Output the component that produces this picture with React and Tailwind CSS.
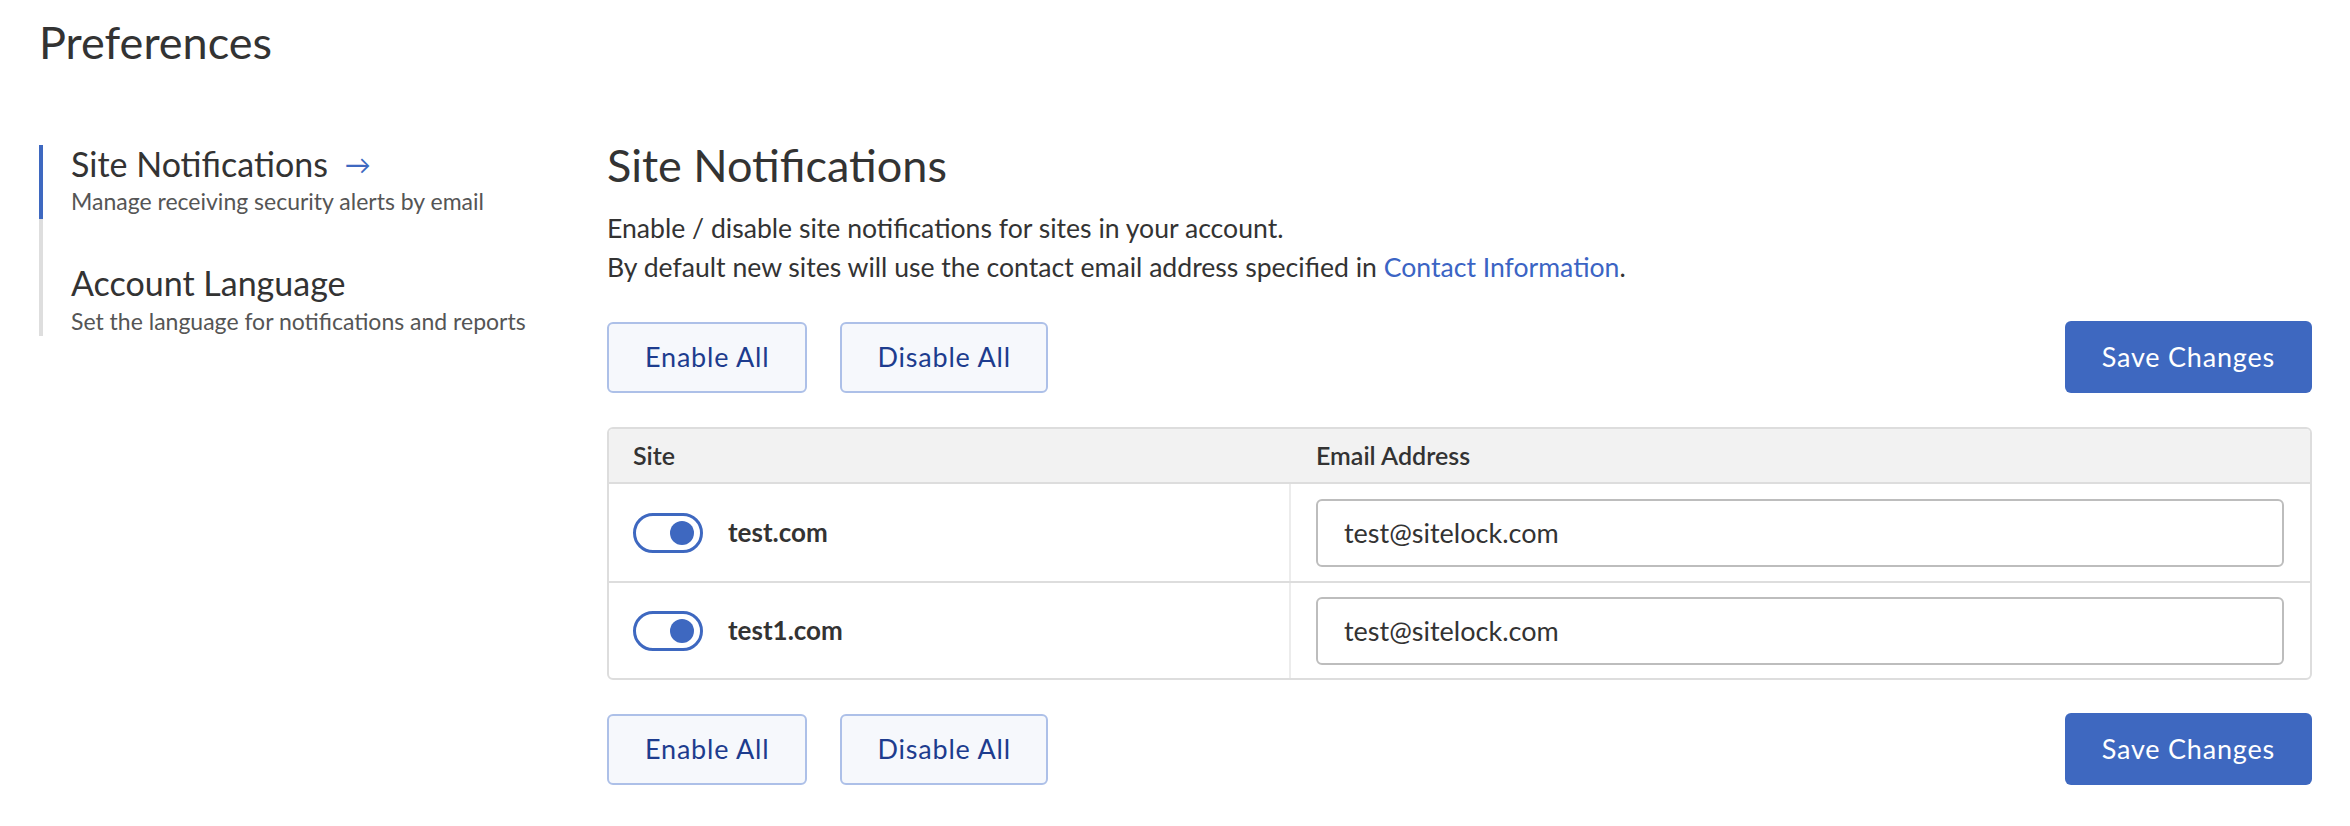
import React from 'react'

const sites = [
  { name: 'test.com', email: 'test@sitelock.com' },
  { name: 'test1.com', email: 'test@sitelock.com' },
]

function Toggle() {
  return (
    <div className="w-[70px] h-[40px] rounded-full border-[3px] border-[#3e68c0] bg-white flex items-center justify-end pr-[6px] shrink-0">
      <div className="w-[24px] h-[24px] rounded-full bg-[#3e68c0]" />
    </div>
  )
}

function ActionRow() {
  return (
    <div className="flex items-center justify-between">
      <div className="flex gap-[33px]">
        <button className="h-[71px] px-[36px] rounded-[6px] border-2 border-[#adc0e8] bg-[#f6f8fc] text-[#1d3c8e] text-[27px] tracking-[0.8px]">
          Enable All
        </button>
        <button className="h-[71px] px-[35px] rounded-[6px] border-2 border-[#adc0e8] bg-[#f6f8fc] text-[#1d3c8e] text-[27px] tracking-[0.8px]">
          Disable All
        </button>
      </div>
      <button className="h-[72px] px-[37px] rounded-[6px] bg-[#3e68c0] text-white text-[27px] tracking-[0.8px]">
        Save Changes
      </button>
    </div>
  )
}

export default function App() {
  return (
    <main className="min-h-screen bg-white text-[#333] font-['Lato','Liberation_Sans',sans-serif] pl-[39px] pr-[38px] pt-[14px]">
      {/* Page title */}
      <h1 className="text-[45px] leading-[56px] text-[#333]">Preferences</h1>

      <div className="flex mt-[71px]">
        {/* Sidebar */}
        <nav className="w-[568px] shrink-0 pt-[4px]">
          <div className="border-l-4 border-[#3e68c0] pl-[28px] pb-[4px]">
            <div className="flex items-center gap-[17px] text-[34px] leading-[38px] text-[#333]">
              Site Notifications
              <span className="text-[#3e68c0] text-[26px]">→</span>
            </div>
            <div className="text-[23px] leading-[28px] text-[#555] mt-[4px]">
              Manage receiving security alerts by email
            </div>
          </div>
          <div className="border-l-4 border-[#dedede] pl-[28px] pt-[45px] pb-[1px]">
            <div className="text-[34px] leading-[38px] text-[#333]">Account Language</div>
            <div className="text-[23px] leading-[28px] text-[#555] mt-[5px]">
              Set the language for notifications and reports
            </div>
          </div>
        </nav>

        {/* Main */}
        <section className="flex-1">
          <h2 className="text-[45px] leading-[48px] text-[#333]">Site Notifications</h2>
          <div className="mt-[20px] text-[26.6px] leading-[39px] text-[#333]">
            <p>Enable / disable site notifications for sites in your account.</p>
            <p>
              By default new sites will use the contact email address specified in{' '}
              <a className="text-[#3b64c4]">Contact Information</a>.
            </p>
          </div>

          <div className="mt-[34px]">
            <ActionRow />
          </div>

          <div className="mt-[34px] border-2 border-[#dddddd] rounded-[6px] overflow-hidden">
            <div className="grid grid-cols-[682px_1fr] bg-[#f2f2f2] h-[55px] items-center border-b-2 border-[#dddddd] font-semibold text-[25px]">
              <div className="pl-[24px]">Site</div>
              <div className="pl-[25px]">Email Address</div>
            </div>
            {sites.map((s, i) => (
              <div
                key={s.name}
                className={`grid grid-cols-[682px_1fr] h-[97px] ${i > 0 ? 'border-t-2 border-[#dddddd]' : ''}`}
              >
                <div className="flex items-center gap-[25px] pl-[24px] border-r-2 border-[#ececec]">
                  <Toggle />
                  <span className="font-bold text-[26px]">{s.name}</span>
                </div>
                <div className="flex items-center pl-[25px] pr-[26px]">
                  <input
                    readOnly
                    value={s.email}
                    className="w-full h-[68px] rounded-[6px] border-2 border-[#bdbdbd] px-[26px] text-[27px] text-[#333] outline-none"
                  />
                </div>
              </div>
            ))}
          </div>

          <div className="mt-[33px]">
            <ActionRow />
          </div>
        </section>
      </div>
    </main>
  )
}
